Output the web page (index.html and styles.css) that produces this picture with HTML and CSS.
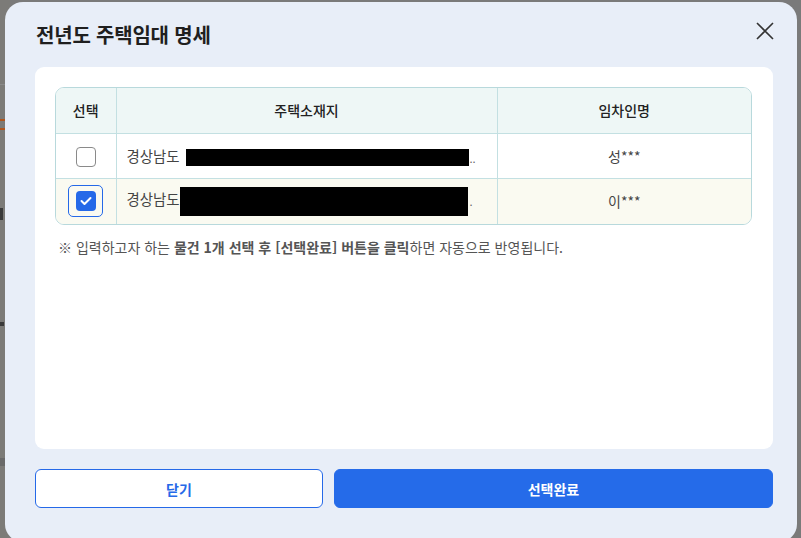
FILE: index.html
```html
<!DOCTYPE html>
<html lang="ko">
<head>
<meta charset="utf-8">
<title>전년도 주택임대 명세</title>
<link rel="stylesheet" href="styles.css">
</head>
<body>
<div class="page">
  <div class="backdrop">
    <span class="bk bk1"></span>
    <span class="bk bk2"></span>
    <span class="bk bk3"></span>
    <span class="bk bk4"></span>
    <span class="bk bk5"></span>
  </div>
  <div class="modal">
    <div class="modal-head">
      <h1 class="modal-title">전년도 주택임대 명세</h1>
      <button class="close-btn" aria-label="닫기">
        <svg width="18" height="18" viewBox="0 0 18 18"><path d="M1 1 L17 17 M17 1 L1 17" stroke="#333" stroke-width="1.6" fill="none"/></svg>
      </button>
    </div>
    <div class="modal-body">
      <div class="table-wrap">
        <table class="list">
          <thead>
            <tr>
              <th class="c-sel">선택</th>
              <th class="c-addr">주택소재지</th>
              <th class="c-name">임차인명</th>
            </tr>
          </thead>
          <tbody>
            <tr>
              <td class="c-sel"><span class="chk"></span></td>
              <td class="c-addr">경상남도 <span class="mask mask1"></span><span class="dots">..</span></td>
              <td class="c-name">성***</td>
            </tr>
            <tr class="selected">
              <td class="c-sel"><span class="chk-ring"><span class="chk on"><svg width="12" height="10" viewBox="0 0 12 10"><path d="M1.5 5 L4.5 8 L10.5 2" stroke="#fff" stroke-width="2" fill="none" stroke-linecap="round" stroke-linejoin="round"/></svg></span></span></td>
              <td class="c-addr">경상남도<span class="mask mask2"></span><span class="dots">.</span></td>
              <td class="c-name">이***</td>
            </tr>
          </tbody>
        </table>
      </div>
      <p class="note">※ 입력하고자 하는 <b>물건 1개 선택 후 [선택완료] 버튼을 클릭</b>하면 자동으로 반영됩니다.</p>
    </div>
    <div class="modal-foot">
      <button class="btn btn-line">닫기</button>
      <button class="btn btn-fill">선택완료</button>
    </div>
  </div>
</div>
</body>
</html>
```
FILE: styles.css
```css
* { box-sizing: border-box; }
html, body { margin: 0; padding: 0; }
body {
  width: 801px;
  height: 538px;
  overflow: hidden;
  background: #7a7a7a;
  font-family: "Noto Sans CJK KR", "Noto Sans", sans-serif;
}
.page {
  position: relative;
  width: 801px;
  height: 538px;
  overflow: hidden;
}
.backdrop {
  position: absolute;
  left: 0; top: 0;
  width: 10px; height: 538px;
  background: #7c7b78;
}
.bk { position: absolute; left: 0; width: 5px; }
.bk1 { top: 84px; height: 1px; background: #8a8a8a; }
.bk2 { top: 119px; height: 11px; border-top: 2px solid #b0561e; border-bottom: 2px solid #b0561e; }
.bk3 { top: 208px; height: 12px; background: #3a3a3a; width: 3px; }
.bk4 { top: 322px; height: 4px; background: #3a3a3a; width: 4px; }
.bk5 { top: 458px; height: 8px; background: #6a6a6a; }

.modal {
  position: absolute;
  left: 5px;
  top: 2px;
  width: 792px;
  height: 540px;
  background: #e8eef8;
  border-radius: 18px;
  padding: 0 28px 0 30px;
  display: flex;
  flex-direction: column;
}
.modal-head {
  height: 65px;
  display: flex;
  align-items: center;
  justify-content: space-between;
}
.modal-title {
  margin: 0;
  font-size: 20px;
  font-weight: 700;
  color: #1f1f1f;
  letter-spacing: -0.2px;
  padding-left: 1px;
}
.close-btn {
  border: 0;
  background: none;
  padding: 0;
  width: 18px;
  height: 18px;
  margin-top: -8px;
  margin-right: -5px;
  cursor: pointer;
}
.close-btn svg { display: block; }

.modal-body {
  width: 738px;
  height: 382px;
  background: #fff;
  border-radius: 9px;
  padding: 20px 20px;
}
.table-wrap {
  width: 697px;
  border: 1px solid #b8d9dc;
  border-radius: 9px;
  overflow: hidden;
}
.list {
  width: 100%;
  border-collapse: collapse;
  table-layout: fixed;
}
.list th, .list td {
  border-left: 1px solid #c3e0e2;
  border-top: 1px solid #c3e0e2;
  padding: 0;
  font-size: 14px;
  color: #333;
}
.list th:first-child, .list td:first-child { border-left: 0; }
.list thead th { border-top: 0; }
.list th {
  height: 45px;
  background: #eef7f6;
  font-weight: 500;
  color: #222;
}
.list td { height: 45px; }
.list tr.selected td { background: #fafaf1; height: 46px; }
.c-sel { width: 60px; text-align: center; }
.c-addr { width: 381px; }
.list td.c-addr { padding-left: 10px; white-space: nowrap; overflow: hidden; color: #444; font-size: 14.4px; }
.c-name { text-align: center; }
.list td.c-name { color: #444; }

.chk {
  display: inline-flex;
  align-items: center;
  justify-content: center;
  width: 20px;
  height: 20px;
  border: 1px solid #8a8a8a;
  border-radius: 4px;
  background: #fff;
  vertical-align: middle;
}
.chk.on {
  border: 0;
  background: #2569e8;
}
.chk-ring {
  display: inline-flex;
  align-items: center;
  justify-content: center;
  width: 35px;
  height: 32px;
  border: 1px solid #2569e8;
  border-radius: 5px;
  vertical-align: middle;
}
.mask {
  display: inline-block;
  background: #000;
  vertical-align: middle;
}
.mask1 { width: 283px; height: 17px; margin-left: 2px; }
.mask2 { width: 288px; height: 29px; margin-left: 1px; }
.dots { font-size: 11px; color: #666; vertical-align: middle; margin-left: 1px; }

.note {
  margin: 12px 0 0 3px;
  font-size: 14px;
  line-height: 20px;
  color: #555;
  letter-spacing: 0;
}
.note b { font-weight: 700; color: #555; }

.modal-foot {
  display: flex;
  gap: 11px;
  margin-top: 20px;
  width: 738px;
}
.btn {
  height: 39px;
  border-radius: 6px;
  font-family: inherit;
  font-size: 14px;
  font-weight: 700;
  cursor: pointer;
}
.btn-line {
  width: 288px;
  background: #fff;
  border: 1px solid #2569e8;
  color: #2569e8;
}
.btn-fill {
  flex: 1;
  background: #256be9;
  border: 1px solid #256be9;
  color: #fff;
}
```
